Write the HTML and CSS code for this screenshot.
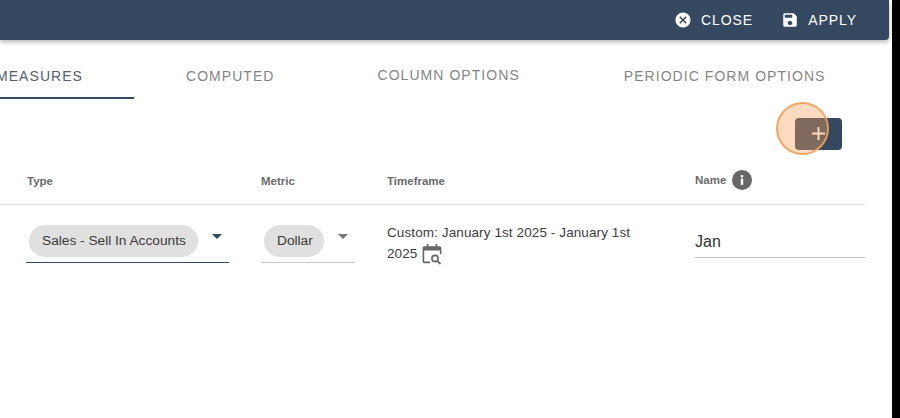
FILE: index.html
```html
<!DOCTYPE html>
<html lang="en">
<head>
<meta charset="utf-8">
<title>Measures</title>
<link rel="stylesheet" href="styles.css">
</head>
<body>
<div class="frame">
  <main class="panel">
    <header class="topbar">
      <button class="bar-btn">
        <svg class="bar-icon" viewBox="0 0 24 24"><path fill="#fff" d="M12 2C6.47 2 2 6.47 2 12s4.47 10 10 10 10-4.47 10-10S17.53 2 12 2zm5 13.59L15.59 17 12 13.41 8.41 17 7 15.59 10.59 12 7 8.41 8.41 7 12 10.59 15.59 7 17 8.41 13.41 12 17 15.59z"/></svg>
        CLOSE
      </button>
      <button class="bar-btn">
        <svg class="bar-icon" viewBox="0 0 24 24"><path fill="#fff" d="M17 3H5c-1.11 0-2 .9-2 2v14c0 1.1.89 2 2 2h14c1.1 0 2-.9 2-2V7l-4-4zm-5 16c-1.66 0-3-1.34-3-3s1.34-3 3-3 3 1.34 3 3-1.34 3-3 3zm3-10H5V5h10v4z"/></svg>
        APPLY
      </button>
    </header>

    <nav class="tabs">
      <div class="tab tab-active">MEASURES</div>
      <div class="tab tab-computed">COMPUTED</div>
      <div class="tab tab-column">COLUMN OPTIONS</div>
      <div class="tab tab-periodic">PERIODIC FORM OPTIONS</div>
    </nav>

    <div class="actions">
      <button class="add-btn" aria-label="Add">
        <svg class="plus" viewBox="0 0 16 16"><path d="M8 1v14M1 8h14" stroke="#fff" stroke-width="2" fill="none"/></svg>
      </button>
      <span class="spot"></span>
    </div>

    <section class="grid">
      <div class="head">Type</div>
      <div class="head">Metric</div>
      <div class="head">Timeframe</div>
      <div class="head head-name">Name
        <svg class="info" viewBox="0 0 20 20"><circle cx="10" cy="10" r="10" fill="#666"/><rect x="8.8" y="8.6" width="2.4" height="6.4" fill="#fff"/><rect x="8.8" y="5" width="2.4" height="2.4" fill="#fff"/></svg>
      </div>

      <div class="cell">
        <div class="select select-dark">
          <span class="chip">Sales - Sell In Accounts</span>
          <span class="caret caret-dark"></span>
        </div>
      </div>
      <div class="cell">
        <div class="select select-light">
          <span class="chip chip-short">Dollar</span>
          <span class="caret"></span>
        </div>
      </div>
      <div class="cell timeframe">
        Custom: January 1st 2025 - January 1st<br>2025
        <svg class="cal" viewBox="0 0 20 22"><path fill="none" stroke="#666" stroke-width="1.6" d="M8 19.4H2.4a1 1 0 0 1-1-1V5a1 1 0 0 1 1-1h15.2a1 1 0 0 1 1 1v6"/><path fill="#666" d="M1.4 4h17.2v3.4H1.4zM4.8 1h1.7v4H4.8zM13.5 1h1.7v4h-1.7z"/><circle cx="13" cy="15.5" r="3.1" fill="none" stroke="#666" stroke-width="1.6"/><path d="M15.3 17.8l3.2 3.2" stroke="#666" stroke-width="1.8"/></svg>
      </div>
      <div class="cell">
        <div class="name-field">Jan</div>
      </div>
    </section>
  </main>
</div>
</body>
</html>
```

FILE: styles.css
```css
html, body {
  margin: 0;
  height: 100%;
  background: #000;
}
.frame {
  width: 892px;
  height: 418px;
  overflow: hidden;
  background: #fff;
}
.panel {
  font-family: "Liberation Sans", Arial, sans-serif;
  color: #333;
  position: relative;
}
.topbar {
  width: 889px;
  height: 40px;
  box-sizing: border-box;
  background: #34495f;
  border-radius: 0 0 4px 0;
  box-shadow: 0 2px 5px rgba(0, 0, 0, .3);
  display: flex;
  justify-content: flex-end;
  align-items: center;
  gap: 28px;
  padding-right: 32px;
}
.bar-btn {
  display: flex;
  align-items: center;
  gap: 9px;
  padding: 0;
  border: 0;
  background: none;
  color: #fff;
  font: 14px "Liberation Sans", Arial, sans-serif;
  letter-spacing: .95px;
}
.bar-icon {
  width: 18px;
  height: 18px;
}
.tabs {
  display: flex;
  height: 59px;
  box-sizing: border-box;
  margin-left: -4px;
  font-size: 14px;
  letter-spacing: 1.05px;
  color: #858585;
}
.tab {
  padding-top: 28px;
  white-space: nowrap;
}
.tab-active {
  width: 138px;
  box-sizing: border-box;
  color: #55606c;
  border-bottom: 2px solid #34495f;
}
.tab-computed { margin-left: 52px; }
.tab-column { margin-left: 103px; padding-top: 27px; }
.tab-periodic { margin-left: 104px; }
.actions {
  position: relative;
  height: 51px;
}
.add-btn {
  position: absolute;
  left: 795px;
  top: 19px;
  width: 47px;
  height: 32px;
  padding: 0;
  border: 0;
  border-radius: 4px;
  background: #34495f;
}
.plus {
  position: absolute;
  left: 16px;
  top: 8px;
  width: 15px;
  height: 15px;
}
.spot {
  position: absolute;
  left: 776px;
  top: 3px;
  width: 53px;
  height: 53px;
  box-sizing: border-box;
  border-radius: 50%;
  border: 2px solid rgba(243, 160, 90, .9);
  background: rgba(250, 160, 90, .38);
}
.grid {
  display: grid;
  width: 865px;
  box-sizing: border-box;
  padding-left: 26px;
  grid-template-columns: 235px 126px 308px 170px;
  grid-template-rows: 55px auto;
}
.head {
  display: flex;
  align-items: center;
  gap: 6px;
  padding: 7px 0 0 0;
  font-size: 11.5px;
  font-weight: 700;
  color: #6a6a6a;
  border-bottom: 1px solid #dcdcdc;
}
.head:first-child {
  margin-left: -26px;
  padding-left: 27px;
}
.head-name {
  padding-top: 5px;
}
.info {
  width: 20px;
  height: 20px;
}
.cell {
  padding-top: 20px;
  font-size: 13.7px;
}
.select {
  display: flex;
  align-items: flex-start;
  height: 37px;
}
.select-dark {
  width: 200px;
  padding-left: 3px;
  border-bottom: 1.5px solid #34495f;
}
.select-light {
  width: 91px;
  padding-left: 3px;
  border-bottom: 1px solid #c8c8c8;
}
.chip {
  height: 32px;
  line-height: 32px;
  padding: 0 12px 0 13px;
  border-radius: 16px;
  background: #e0e0e0;
  color: #3a3a3a;
  white-space: nowrap;
}
.chip-short {
  padding-right: 11px;
}
.caret {
  margin: 9px 0 0 14px;
  border-left: 5px solid transparent;
  border-right: 5px solid transparent;
  border-top: 5px solid #777;
}
.caret-dark { border-top-color: #34495f; }
.timeframe {
  color: #3d3d3d;
  line-height: 21px;
  letter-spacing: .1px;
  padding-top: 17px;
  font-size: 13.5px;
}
.cal {
  width: 20px;
  height: 22px;
  vertical-align: 0;
  margin: -15px 0 -7px 1px;
}
.name-field {
  height: 32px;
  line-height: 34px;
  font-size: 16px;
  color: #333;
  border-bottom: 1px solid #bdbdbd;
}
```
